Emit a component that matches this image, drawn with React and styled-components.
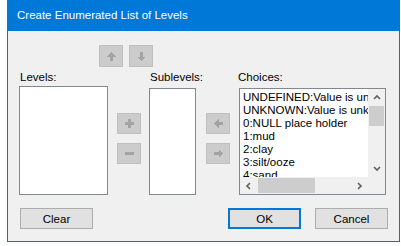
import React from "react";
import styled, { createGlobalStyle } from "styled-components";

const GlobalStyle = createGlobalStyle`
  html, body {
    margin: 0;
    padding: 0;
    background: #ffffff;
  }
  body {
    font-family: "Liberation Sans", Arial, sans-serif;
    font-size: 11.5px;
    color: #000;
  }
`;

const choices = [
  "UNDEFINED:Value is undefined",
  "UNKNOWN:Value is unknown",
  "0:NULL place holder",
  "1:mud",
  "2:clay",
  "3:silt/ooze",
  "4:sand",
  "5:gravel",
];

// thick little arrows used on the disabled move buttons
const shapes = {
  up: "4.5,0 9,4.5 6,4.5 6,9 3,9 3,4.5 0,4.5",
  down: "4.5,9 9,4.5 6,4.5 6,0 3,0 3,4.5 0,4.5",
  left: "0,4.5 4.5,0 4.5,3 9,3 9,6 4.5,6 4.5,9",
  right: "9,4.5 4.5,0 4.5,3 0,3 0,6 4.5,6 4.5,9",
  plus: "3,0 6,0 6,3 9,3 9,6 6,6 6,9 3,9 3,6 0,6 0,3 3,3",
  minus: "0,3 9,3 9,6 0,6",
};

function Glyph({ kind }) {
  return (
    <svg width="9" height="9" viewBox="0 0 9 9" shapeRendering="crispEdges">
      <polygon points={shapes[kind]} fill="#a3a3a3" />
    </svg>
  );
}

// scrollbar chevrons
const chevrons = {
  up: "1,5 4,2 7,5",
  down: "1,2 4,5 7,2",
  left: "5,1 2,4 5,7",
  right: "2,1 5,4 2,7",
};

function Chevron({ dir }) {
  return (
    <svg width="8" height="8" viewBox="0 0 8 8">
      <polyline
        points={chevrons[dir]}
        fill="none"
        stroke="#606060"
        strokeWidth="1.6"
      />
    </svg>
  );
}

export default function App() {
  return (
    <>
      <GlobalStyle />
      <Window>
        <TitleBar>Create Enumerated List of Levels</TitleBar>
        <Client>
          <TopRow>
            <IconButton disabled>
              <Glyph kind="up" />
            </IconButton>
            <IconButton disabled>
              <Glyph kind="down" />
            </IconButton>
          </TopRow>

          <MainRow>
            <Column $width={89}>
              <Label>Levels:</Label>
              <ListBox $height={109} />
            </Column>

            <MoveColumn $gap={9}>
              <IconButton disabled>
                <Glyph kind="plus" />
              </IconButton>
              <IconButton disabled>
                <Glyph kind="minus" />
              </IconButton>
            </MoveColumn>

            <Column $width={47} $gap={8}>
              <Label>Sublevels:</Label>
              <ListBox $height={107} />
            </Column>

            <MoveColumn $gap={10}>
              <IconButton disabled>
                <Glyph kind="left" />
              </IconButton>
              <IconButton disabled>
                <Glyph kind="right" />
              </IconButton>
            </MoveColumn>

            <Column $width={147} $gap={9}>
              <Label $shift={-1}>Choices:</Label>
              <ChoiceBox>
                <Items>
                  {choices.map((c) => (
                    <Item key={c}>{c}</Item>
                  ))}
                </Items>
                <VScroll>
                  <ScrollArrow>
                    <Chevron dir="up" />
                  </ScrollArrow>
                  <VTrack>
                    <VThumb />
                  </VTrack>
                  <ScrollArrow>
                    <Chevron dir="down" />
                  </ScrollArrow>
                </VScroll>
                <HScroll>
                  <ScrollArrow>
                    <Chevron dir="left" />
                  </ScrollArrow>
                  <HTrack>
                    <HThumb />
                  </HTrack>
                  <ScrollArrow>
                    <Chevron dir="right" />
                  </ScrollArrow>
                </HScroll>
                <Corner />
              </ChoiceBox>
            </Column>
          </MainRow>

          <BottomRow>
            <PushButton>Clear</PushButton>
            <Spacer />
            <PushButton $default>OK</PushButton>
            <PushButton>Cancel</PushButton>
          </BottomRow>
        </Client>
      </Window>
    </>
  );
}

const Window = styled.div`
  width: 393px;
  height: 242px;
  margin-left: 7px;
  box-sizing: border-box;
  border: 1px solid #0078d7;
  border-top: none;
  background: #f0f0f0;
  display: flex;
  flex-direction: column;
`;

const TitleBar = styled.div`
  height: 31px;
  flex: none;
  background: #0078d7;
  color: #ffffff;
  line-height: 31px;
  padding-left: 9px;
  white-space: nowrap;
`;

const Client = styled.div`
  flex: 1;
  display: flex;
  flex-direction: column;
  padding: 14px 0 12px 0;
`;

const TopRow = styled.div`
  display: flex;
  gap: 6px;
  padding-left: 91px;
  height: 22px;
`;

const IconButton = styled.button`
  width: 24px;
  height: 22px;
  padding: 0;
  margin: 0;
  box-sizing: border-box;
  border: 1px solid #bfbfbf;
  background: #cccccc;
  display: flex;
  align-items: center;
  justify-content: center;
`;

const MainRow = styled.div`
  display: flex;
  height: 126px;
  margin-top: 2px;
  padding-left: 11px;
`;

const Column = styled.div`
  width: ${(p) => p.$width}px;
  margin-left: ${(p) => p.$gap || 0}px;
  display: flex;
  flex-direction: column;
`;

const Label = styled.div`
  line-height: 16px;
  margin-left: ${(p) => p.$shift || 1}px;
  white-space: nowrap;
`;

const ListBox = styled.div`
  margin-top: auto;
  height: ${(p) => p.$height}px;
  box-sizing: border-box;
  border: 1px solid #828790;
  background: #ffffff;
`;

const MoveColumn = styled.div`
  margin-left: ${(p) => p.$gap}px;
  padding-top: 44px;
  display: flex;
  flex-direction: column;
  gap: 9px;

  & > button {
    height: 21px;
  }
`;

const ChoiceBox = styled.div`
  margin-top: auto;
  height: 107px;
  box-sizing: border-box;
  border: 1px solid #828790;
  background: #ffffff;
  display: grid;
  grid-template-columns: 1fr 17px;
  grid-template-rows: 1fr 17px;
  overflow: hidden;
`;

const Items = styled.div`
  overflow: hidden;
  padding: 2px 0 0 3px;
`;

const Item = styled.div`
  line-height: 13px;
  white-space: nowrap;
`;

const VScroll = styled.div`
  background: #f0f0f0;
  display: flex;
  flex-direction: column;
`;

const HScroll = styled.div`
  background: #f0f0f0;
  display: flex;
`;

const ScrollArrow = styled.div`
  width: 17px;
  height: 17px;
  flex: none;
  display: flex;
  align-items: center;
  justify-content: center;
`;

const VTrack = styled.div`
  flex: 1;
  padding: 0 1px;
`;

const VThumb = styled.div`
  height: 20px;
  background: #cdcdcd;
`;

const HTrack = styled.div`
  flex: 1;
  padding: 1px 0;
`;

const HThumb = styled.div`
  width: 57px;
  height: 100%;
  margin-left: 1px;
  background: #cdcdcd;
`;

const Corner = styled.div`
  background: #f0f0f0;
`;

const BottomRow = styled.div`
  display: flex;
  gap: 14px;
  margin-top: 13px;
  padding: 0 11px 0 12px;
`;

const Spacer = styled.div`
  flex: 1;
`;

const PushButton = styled.button`
  width: 73px;
  height: 21px;
  margin: 0;
  padding: 0;
  box-sizing: border-box;
  font-family: "Liberation Sans", Arial, sans-serif;
  font-size: 11.5px;
  color: #000;
  background: #e1e1e1;
  border: ${(p) => (p.$default ? "2px solid #0078d7" : "1px solid #adadad")};
`;
